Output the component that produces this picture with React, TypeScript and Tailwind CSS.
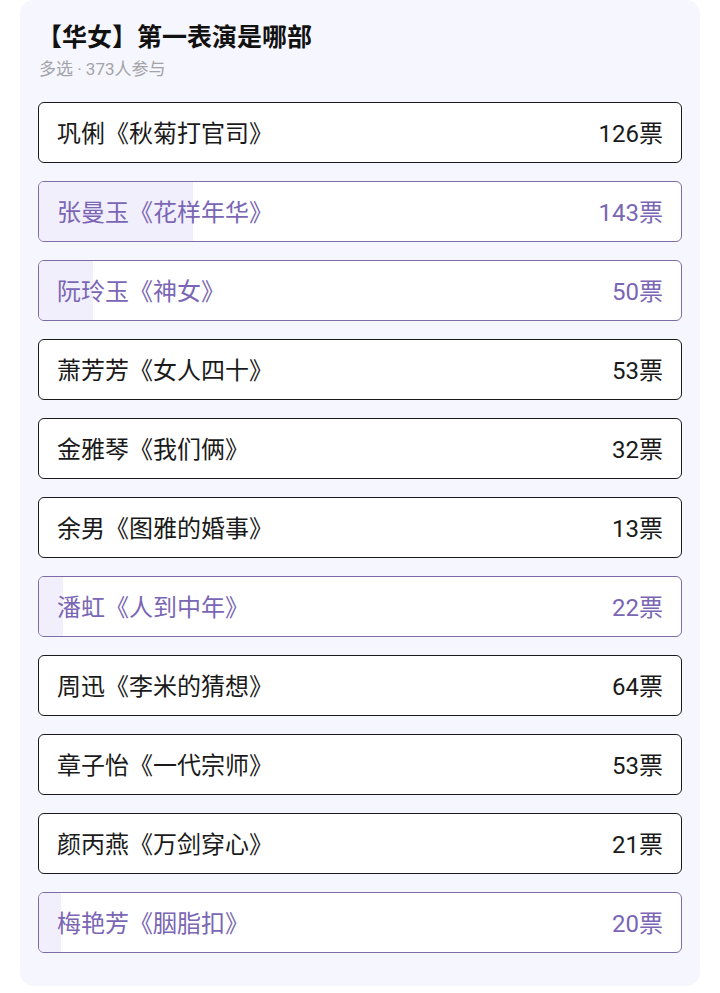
import React from 'react';

type Option = {
    label: string;
    votes: number;
    picked: boolean;
}

const options: Option[] = [
    { label: '巩俐《秋菊打官司》', votes: 126, picked: false },
    { label: '张曼玉《花样年华》', votes: 143, picked: true },
    { label: '阮玲玉《神女》', votes: 50, picked: true },
    { label: '萧芳芳《女人四十》', votes: 53, picked: false },
    { label: '金雅琴《我们俩》', votes: 32, picked: false },
    { label: '余男《图雅的婚事》', votes: 13, picked: false },
    { label: '潘虹《人到中年》', votes: 22, picked: true },
    { label: '周迅《李米的猜想》', votes: 64, picked: false },
    { label: '章子怡《一代宗师》', votes: 53, picked: false },
    { label: '颜丙燕《万剑穿心》', votes: 21, picked: false },
    { label: '梅艳芳《胭脂扣》', votes: 20, picked: true },
];

const total = options.reduce((s, o) => s + o.votes, 0);

const Row = ({ label, votes, picked }: Option) => {
    const pct = (votes / total) * 100;
    return (
        <div className={`relative h-[61px] rounded-[6px] border bg-white overflow-hidden ${picked ? 'border-[#7d6ca6]' : 'border-[#1a1a1a]'}`}>
            {picked && (
                <div className="absolute left-0 top-0 bottom-0 bg-[#f2effd]" style={{ width: `${pct}%` }} />
            )}
            <div className={`relative h-full flex items-center justify-between pl-[18px] pr-[18px] pt-[2px] text-[24px] ${picked ? 'text-[#7a66b4]' : 'text-[#1a1a1a]'}`}>
                <span>{label}</span>
                <span>{votes}票</span>
            </div>
        </div>
    );
};

export default function App() {
    return (
        <div lang="zh-CN" className="w-[720px] h-[993px] bg-white px-[20px] [text-spacing-trim:space-all]" style={{ fontFamily: 'Roboto, "Noto Sans CJK SC", sans-serif' }}>
            <div className="bg-[#f6f6fe] rounded-[14px] px-[18px] pt-[22px] pb-[33px]">
                <h1 className="text-[25px] leading-[32px] font-bold text-[#111] -ml-[1px]">【华女】第一表演是哪部</h1>
                <p className="text-[17px] leading-[22px] text-[#a3a3a8] mt-[4px] mb-[22px] ml-[1px]">多选 · 373人参与</p>
                <div className="flex flex-col gap-[18px]">
                    {options.map((o) => (
                        <Row key={o.label} {...o} />
                    ))}
                </div>
            </div>
        </div>
    );
}
